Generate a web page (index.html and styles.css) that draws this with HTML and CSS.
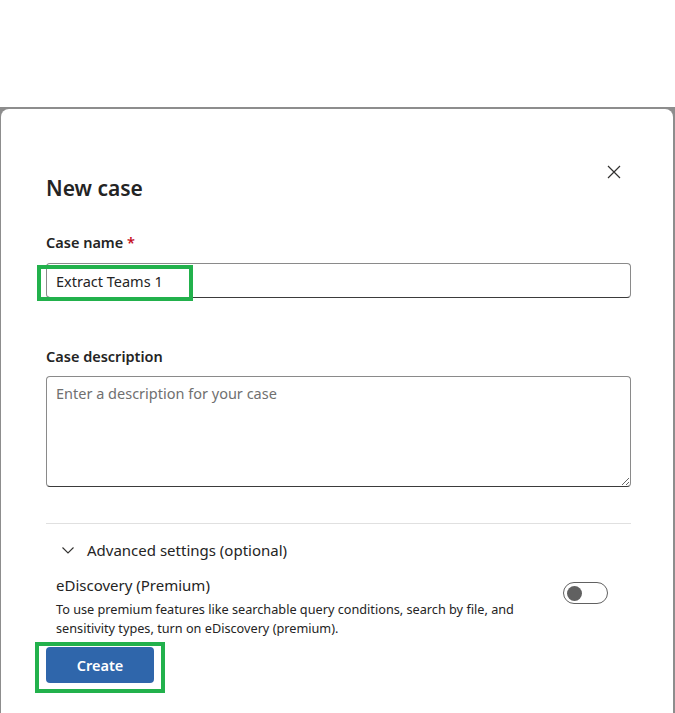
FILE: index.html
```html
<!DOCTYPE html>
<html lang="en">
<head>
    <meta charset="UTF-8">
    <meta name="viewport" content="width=device-width, initial-scale=1.0">
    <title>New case</title>
    <link rel="stylesheet" href="styles.css">
</head>
<body>
    <div class="fundo">
        <div class="painel">
            <button class="fechar" aria-label="Close">
                <svg width="14" height="14" viewBox="0 0 14 14"><path d="M1 1 L13 13 M13 1 L1 13" stroke="#323130" stroke-width="1.2" fill="none"/></svg>
            </button>

            <h1 class="titulo">New case</h1>

            <label class="rotulo" for="nome">Case name <span class="obrigatorio">*</span></label>
            <div class="destaque-campo">
                <input type="text" id="nome" class="campo" value="Extract Teams 1">
                <span class="marca marca-nome"></span>
            </div>

            <label class="rotulo rotulo-desc" for="desc">Case description</label>
            <textarea id="desc" class="area" placeholder="Enter a description for your case"></textarea>

            <hr class="divisor">

            <div class="avancado">
                <svg width="14" height="14" viewBox="0 0 14 14"><path d="M1.5 4.5 L7 10 L12.5 4.5" stroke="#323130" stroke-width="1.1" fill="none"/></svg>
                <span>Advanced settings (optional)</span>
            </div>

            <div class="premium">
                <div class="premium-texto">
                    <p class="premium-titulo">eDiscovery (Premium)</p>
                    <p class="premium-info">To use premium features like searchable query conditions, search by file, and sensitivity types, turn on eDiscovery (premium).</p>
                </div>
                <span class="chave"><span class="bolinha"></span></span>
            </div>

            <div class="rodape">
                <button class="criar">Create</button>
                <span class="marca marca-criar"></span>
            </div>
        </div>
    </div>
</body>
</html>
```

FILE: styles.css
```css
body {
    margin: 0;
    padding: 0;
    background-color: #ffffff;
    font-family: "Noto Sans", "Open Sans", sans-serif;
    color: #242424;
}

/* Fundo cinza atrás do painel */
.fundo {
    margin-top: 107px;
    background-color: #8d8d8d;
    padding: 2px 2px 0 1px;
    height: 604px;
}

.painel {
    position: relative;
    background-color: #ffffff;
    border-radius: 8px 8px 0 0;
    height: 604px;
    padding: 0 42px 0 45px;
    box-sizing: border-box;
}

.fechar {
    position: absolute;
    top: 56px;
    right: 52px;
    background: none;
    border: none;
    padding: 0;
    width: 14px;
    height: 14px;
    cursor: pointer;
}

.titulo {
    margin: 0;
    padding-top: 66px;
    font-size: 21px;
    font-weight: 600;
    line-height: 26px;
}

.rotulo {
    display: block;
    margin-top: 31px;
    font-size: 14.5px;
    font-weight: 600;
    line-height: 20px;
}

.obrigatorio {
    color: #c50f1f;
}

.destaque-campo {
    position: relative;
    margin-top: 11px;
}

.campo {
    display: block;
    width: 100%;
    height: 35px;
    box-sizing: border-box;
    border: 1px solid #8a8a8a;
    border-bottom-color: #3b3b3b;
    border-radius: 4px;
    padding: 0 9px;
    font-family: inherit;
    font-size: 14.5px;
    color: #242424;
}

/* Caixas verdes de destaque */
.marca {
    position: absolute;
    border: 4px solid #22b14c;
    pointer-events: none;
}

.marca-nome {
    left: -9px;
    top: 2px;
    width: 148px;
    height: 28px;
}

.rotulo-desc {
    margin-top: 48px;
}

.area {
    display: block;
    width: 100%;
    height: 111px;
    margin-top: 10px;
    box-sizing: border-box;
    border: 1px solid #8a8a8a;
    border-bottom-color: #3b3b3b;
    border-radius: 4px;
    padding: 6px 9px;
    font-family: inherit;
    font-size: 14.5px;
    resize: vertical;
}

.area::placeholder {
    color: #707070;
}

.divisor {
    border: none;
    border-top: 1px solid #e0e0e0;
    margin: 36px 0 0 0;
}

.avancado {
    display: flex;
    align-items: center;
    gap: 12px;
    margin-top: 16px;
    padding-left: 15px;
    font-size: 15px;
    line-height: 20px;
    color: #242424;
}

.premium {
    display: flex;
    justify-content: space-between;
    align-items: flex-start;
    margin-top: 15px;
    padding-left: 10px;
    padding-right: 23px;
}

.premium-texto {
    width: 490px;
}

.premium-titulo {
    margin: 0;
    font-size: 15px;
    line-height: 20px;
}

.premium-info {
    margin: 5px 0 0 0;
    font-size: 12.7px;
    line-height: 19px;
}

.chave {
    display: flex;
    align-items: center;
    width: 45px;
    height: 22px;
    margin-top: 7px;
    border: 1px solid #616161;
    border-radius: 11px;
    padding: 0 3px;
    box-sizing: border-box;
}

.bolinha {
    width: 15px;
    height: 15px;
    border-radius: 50%;
    background-color: #616161;
}

.rodape {
    position: relative;
    margin-top: 9px;
}

.criar {
    width: 108px;
    height: 36px;
    background-color: #2f66ab;
    color: #ffffff;
    border: none;
    border-radius: 4px;
    font-family: inherit;
    font-size: 14.5px;
    font-weight: 600;
    cursor: pointer;
}

.marca-criar {
    left: -11px;
    top: -5px;
    width: 122px;
    height: 43px;
}
```
